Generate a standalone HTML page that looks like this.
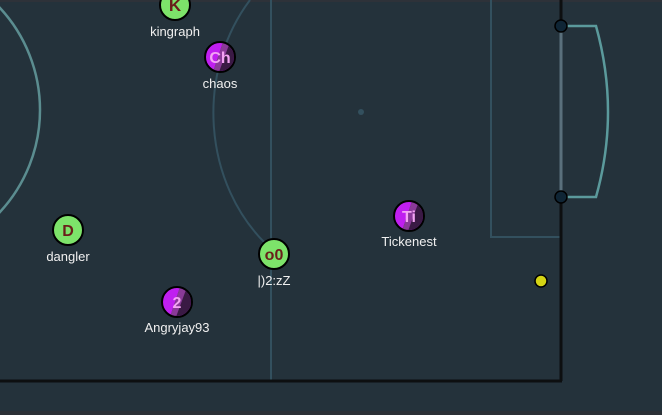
<!DOCTYPE html>
<html><head><style>
html,body{margin:0;padding:0;background:#24323b;}
svg{display:block;}
text{font-family:"Liberation Sans",sans-serif;}
</style></head><body>
<svg width="662" height="415" viewBox="0 0 662 415">
<rect width="662" height="415" fill="#24323b"/>
<rect width="662" height="2" fill="#2e3239"/>
<rect y="411" width="662" height="4" fill="#2b3036"/>
<line x1="271" y1="0" x2="271" y2="380" stroke="#33505e" stroke-width="2"/>
<path d="M250 0 A147 171 0 0 0 265 243" fill="none" stroke="#33505e" stroke-width="2"/>
<circle cx="361" cy="112" r="3" fill="#33505e"/>
<circle cx="-110" cy="110" r="150" fill="none" stroke="#5b8d90" stroke-width="2.5"/>
<polyline points="491,0 491,237 561,237" fill="none" stroke="#33505e" stroke-width="2"/>
<line x1="561" y1="0" x2="561" y2="381" stroke="#0d0f10" stroke-width="3"/>
<line x1="0" y1="381" x2="562" y2="381" stroke="#0d0f10" stroke-width="3"/>
<line x1="561" y1="26" x2="561" y2="197" stroke="#5a707c" stroke-width="3"/>
<path d="M561 26 L596 26 Q620 112 596 197 L561 197" fill="none" stroke="#5b9a9c" stroke-width="2.5"/>
<circle cx="561" cy="26" r="6" fill="#0f2535" stroke="#000" stroke-width="1.5"/>
<circle cx="561" cy="197" r="6" fill="#0f2535" stroke="#000" stroke-width="1.5"/>
<circle cx="541" cy="281" r="6" fill="#d4d414" stroke="#000" stroke-width="1.5"/>
<defs>
<clipPath id="c1"><circle r="14"/></clipPath>
</defs>
<g font-size="13" fill="#f0f0f0" text-anchor="middle">
<g transform="translate(175,5)">
<circle r="15" fill="#7de36a" stroke="#000" stroke-width="2"/>
<text y="6" font-size="17" font-weight="bold" fill="#6a1e1a">K</text>
</g>
<text x="175" y="36">kingraph</text>
<g transform="translate(220,57)">
<circle r="15" fill="#c01ff0"/>
<polygon points="3,-15 15,-15 15,15 -7,15" fill="#3a1a44" clip-path="url(#c1)"/>
<polygon points="3,-15 10,-15 -1,15 -7,15" fill="#8a3a98" clip-path="url(#c1)"/>
<circle r="15" fill="none" stroke="#000" stroke-width="2"/>
<text y="6" font-size="16" font-weight="bold" fill="#f4a4f4">Ch</text>
</g>
<text x="220" y="88">chaos</text>
<g transform="translate(68,230)">
<circle r="15" fill="#7de36a" stroke="#000" stroke-width="2"/>
<text y="6" font-size="16" font-weight="bold" fill="#6a1e1a">D</text>
</g>
<text x="68" y="261">dangler</text>
<g transform="translate(409,216)">
<circle r="15" fill="#c01ff0"/>
<polygon points="3,-15 15,-15 15,15 -7,15" fill="#3a1a44" clip-path="url(#c1)"/>
<polygon points="3,-15 10,-15 -1,15 -7,15" fill="#8a3a98" clip-path="url(#c1)"/>
<circle r="15" fill="none" stroke="#000" stroke-width="2"/>
<text y="6" font-size="16" font-weight="bold" fill="#f4a4f4">Ti</text>
</g>
<text x="409" y="246">Tickenest</text>
<g transform="translate(274,254)">
<circle r="15" fill="#7de36a" stroke="#000" stroke-width="2"/>
<text y="6" font-size="16" font-weight="bold" fill="#6a1e1a">o0</text>
</g>
<text x="274" y="285">|)2:zZ</text>
<g transform="translate(177,302)">
<circle r="15" fill="#c01ff0"/>
<polygon points="3,-15 15,-15 15,15 -7,15" fill="#3a1a44" clip-path="url(#c1)"/>
<polygon points="3,-15 10,-15 -1,15 -7,15" fill="#8a3a98" clip-path="url(#c1)"/>
<circle r="15" fill="none" stroke="#000" stroke-width="2"/>
<text y="6" font-size="16" font-weight="bold" fill="#f4a4f4">2</text>
</g>
<text x="177" y="332">Angryjay93</text>
</g>
</svg>
</body></html>
